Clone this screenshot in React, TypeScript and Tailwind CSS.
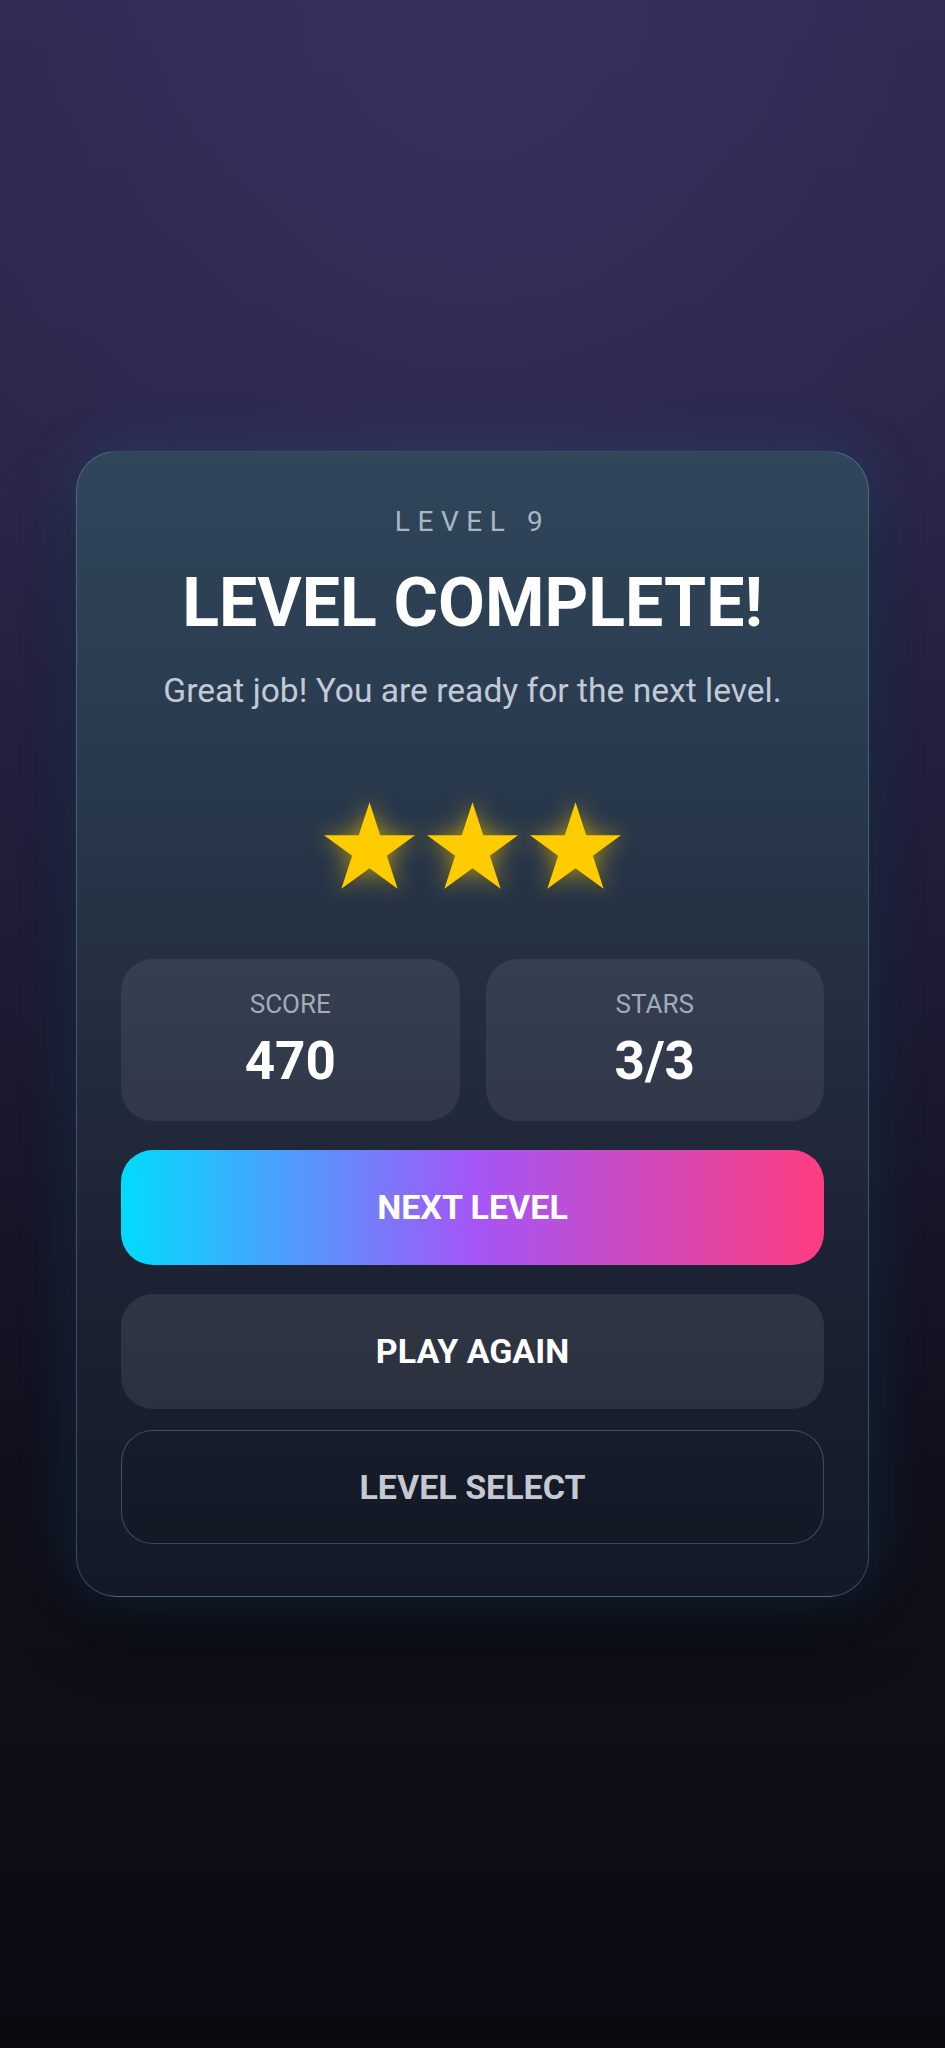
import React from "react";

function Star() {
  return (
    <svg
      width="91"
      height="87"
      viewBox="2.45 0 95.1 90.45"
      className="drop-shadow-[0_0_11px_rgba(255,200,0,0.6)]"
    >
      <polygon
        fill="#ffcc00"
        points="50,0 61.23,34.55 97.55,34.55 68.17,55.9 79.39,90.45 50,69.1 20.61,90.45 31.83,55.9 2.45,34.55 38.77,34.55"
      />
    </svg>
  );
}

function StatBox({ label, value }: { label: string; value: string }) {
  return (
    <div className="flex flex-col items-center rounded-[32px] bg-white/[0.075] pt-[29px] pb-[30px]">
      <div className="text-[26px] leading-[32px] text-[#a3acb9]">{label}</div>
      <div className="mt-[11px] text-[53px] leading-[60px] font-bold text-white">{value}</div>
    </div>
  );
}

export default function App() {
  return (
    <div className="min-h-screen w-full flex items-center justify-center font-['Roboto',sans-serif] bg-[radial-gradient(ellipse_70%_35%_at_50%_0%,#37305f_0%,rgba(55,48,95,0)_100%),linear-gradient(180deg,#2d2a52_0%,#2a2648_25%,#1d1b33_50%,#11111d_72%,#0a0b11_100%)]">
      <div className="w-[793px] rounded-[40px] border border-[#93a7bd]/35 bg-[linear-gradient(180deg,#30465a_0%,#2a3b4f_25%,#243042_45%,#1d2334_70%,#141926_100%)] px-[44px] pt-[53px] pb-[52px] shadow-[0_0_60px_rgba(56,170,240,0.18),0_30px_70px_rgba(0,0,0,0.45)] flex flex-col items-center text-center">
        <div className="text-[28px] leading-[34px] tracking-[0.27em] text-[#a9b6c6] font-normal">
          LEVEL 9
        </div>
        <h1 className="mt-[24px] text-[68px] leading-[80px] font-bold text-white">
          LEVEL COMPLETE!
        </h1>
        <p className="mt-[28px] text-[33.6px] leading-[40px] text-[#c2cad6]">
          Great job! You are ready for the next level.
        </p>
        <div className="mt-[91px] flex gap-[12px]">
          <Star />
          <Star />
          <Star />
        </div>
        <div className="mt-[70px] grid w-full grid-cols-2 gap-[26px]">
          <StatBox label="SCORE" value="470" />
          <StatBox label="STARS" value="3/3" />
        </div>
        <button className="mt-[29px] flex h-[115px] w-full items-center justify-center rounded-[32px] bg-[linear-gradient(90deg,#00dcff_0%,#a456f7_50%,#ff3d80_100%)] text-[34px] font-bold text-white">
          NEXT LEVEL
        </button>
        <button className="mt-[29px] flex h-[115px] w-full items-center justify-center rounded-[32px] bg-white/[0.085] text-[34px] font-bold text-white">
          PLAY AGAIN
        </button>
        <button className="mt-[21px] flex h-[114px] w-full items-center justify-center rounded-[32px] border-[1.5px] border-[#94a3b8]/35 bg-black/[0.05] text-[34px] font-bold text-[#c6c9d1]">
          LEVEL SELECT
        </button>
      </div>
    </div>
  );
}
